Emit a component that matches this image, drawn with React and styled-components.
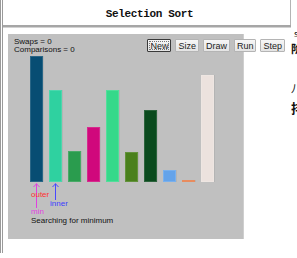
import React from 'react';
import styled, { createGlobalStyle } from 'styled-components';

const GlobalStyle = createGlobalStyle`
  html, body {
    margin: 0;
    padding: 0;
    background: #ffffff;
  }
  body {
    font-family: "Liberation Sans", Arial, sans-serif;
  }
`;

const Page = styled.div`
  display: flex;
  align-items: flex-start;
  width: 297px;
  height: 258px;
  overflow: hidden;
`;

const LeftPanel = styled.div`
  box-sizing: border-box;
  width: 291px;
  height: 253px;
  flex-shrink: 0;
  border-left: 3px double #9a9a9a;
`;

const Title = styled.div`
  box-sizing: border-box;
  height: 25px;
  padding: 8px 0 0 6px;
  border-right: 1px solid #b4b4b4;
  text-align: center;
  font-family: "Liberation Mono", "Courier New", monospace;
  font-weight: bold;
  font-size: 11px;
  line-height: 12px;
  letter-spacing: -0.35px;
  color: #111;
`;

const Rule = styled.div`
  height: 0;
  border-top: 2px solid #a6a6a6;
  border-bottom: 1px solid #d2d2d2;
`;

const Canvas = styled.div`
  box-sizing: border-box;
  width: 236px;
  height: 205px;
  margin: 6px 0 0 5px;
  background: #c0c0c0;
  border-right: 1px solid #cfcfcf;
  font-size: 8px;
  line-height: 8px;
  color: #111;
`;

const TopRow = styled.div`
  display: flex;
  justify-content: space-between;
  align-items: flex-start;
  width: 277px;
  height: 20px;
`;

const Stats = styled.div`
  padding: 4px 0 0 6px;
`;

const Buttons = styled.div`
  display: flex;
  gap: 4px;
  margin-top: 5px;
`;

const Button = styled.button`
  box-sizing: border-box;
  height: 13px;
  padding: 0 2px;
  font-family: "Liberation Sans", Arial, sans-serif;
  font-size: 9px;
  line-height: 10px;
  color: #222;
  background: linear-gradient(#f6f6f6, #e4e4e4);
  border: 1px solid ${(p) => (p.$focus ? '#3a3a3a' : '#b4b4b4')};
  outline: ${(p) => (p.$focus ? '1px dotted #777' : 'none')};
  outline-offset: -3px;
  border-radius: 1px;
`;

const Bars = styled.div`
  display: flex;
  align-items: flex-end;
  gap: 6px;
  height: 128px;
  padding-left: 22px;
`;

const Bar = styled.div`
  box-sizing: border-box;
  width: 13px;
  background: ${(p) => p.$color};
  box-shadow: inset 0 0 0 1px rgba(255, 255, 255, 0.14), 1px 0 0 rgba(0, 0, 0, 0.06);
`;

const Markers = styled.div`
  display: flex;
  gap: 6px;
  margin-top: 1px;
  padding-left: 22px;
`;

const Marker = styled.div`
  display: flex;
  flex-direction: column;
  width: 13px;
`;

const Stack = styled.div`
  display: grid;
  & > * {
    grid-area: 1 / 1;
  }
`;

const Label = styled.div`
  margin: ${(p) => p.$top || 0}px 0 0 1px;
  white-space: nowrap;
  color: ${(p) => p.$color};
`;

const Status = styled.div`
  margin-top: 1px;
  padding-left: 23px;
`;

const RightCol = styled.div`
  width: 6px;
  overflow: hidden;
  padding-top: 29px;
  font-family: "Noto Sans CJK SC", sans-serif;
  color: #111;
`;

const Glyph = styled.div`
  height: ${(p) => p.$h}px;
  font-size: ${(p) => p.$size}px;
  line-height: ${(p) => p.$size}px;
  font-weight: ${(p) => (p.$bold ? 'bold' : 'normal')};
  margin-left: ${(p) => p.$shift || 0}px;
  white-space: nowrap;
`;

const Arrow = ({ color, height }) => (
  <svg width="13" height={height} viewBox={`0 0 13 ${height}`}>
    <line x1="6.5" y1="0.5" x2="6.5" y2={height} stroke={color} strokeWidth="1" />
    <polyline points="3.5,4 6.5,0.8 9.5,4" fill="none" stroke={color} strokeWidth="1" />
  </svg>
);

const bars = [
  { h: 126, color: '#074d73' },
  { h: 92, color: '#2fd1a0' },
  { h: 31, color: '#2a9c4e' },
  { h: 55, color: '#d0087c' },
  { h: 92, color: '#35d98a' },
  { h: 30, color: '#4a801c' },
  { h: 72, color: '#0a4a1d' },
  { h: 12, color: '#64a3ea' },
  { h: 2, color: '#e57a45' },
  { h: 107, color: '#ece2de' },
];

const App = () => {
  return (
    <>
      <GlobalStyle />
      <Page>
        <LeftPanel>
          <Title>Selection Sort</Title>
          <Rule />
          <Canvas>
            <TopRow>
              <Stats>
                <div>Swaps = 0</div>
                <div>Comparisons = 0</div>
              </Stats>
              <Buttons>
                <Button $focus>New</Button>
                <Button>Size</Button>
                <Button>Draw</Button>
                <Button>Run</Button>
                <Button>Step</Button>
              </Buttons>
            </TopRow>
            <Bars>
              {bars.map((b, i) => (
                <Bar key={i} $color={b.color} style={{ height: b.h }} />
              ))}
            </Bars>
            <Markers>
              <Marker>
                <Stack>
                  <Arrow color="#e040e0" height={25} />
                  <Label $color="#ff3030" $top={8}>outer</Label>
                </Stack>
                <Label $color="#e040e0">min</Label>
              </Marker>
              <Marker>
                <Arrow color="#4848ff" height={17} />
                <Label $color="#3c3cff">inner</Label>
              </Marker>
            </Markers>
            <Status>Searching for minimum</Status>
          </Canvas>
        </LeftPanel>
        <RightCol>
          <Glyph $h={14} $size={9} $shift={3}>s</Glyph>
          <Glyph $h={40} $size={11} $bold>阶</Glyph>
          <Glyph $h={18} $size={11}>八</Glyph>
          <Glyph $h={14} $size={13} $bold>排</Glyph>
        </RightCol>
      </Page>
    </>
  );
};

export default App;
